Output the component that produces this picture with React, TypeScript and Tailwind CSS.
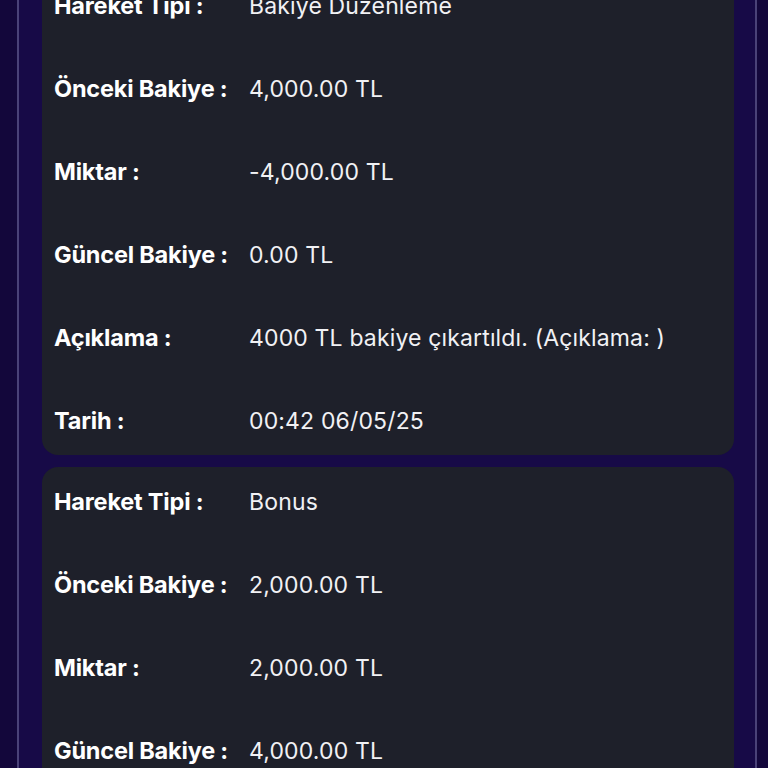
import React from 'react';

type Row = { label: string; value: string };

const transactions: Row[][] = [
  [
    { label: 'Hareket Tipi :', value: 'Bakiye Düzenleme' },
    { label: 'Önceki Bakiye :', value: '4,000.00 TL' },
    { label: 'Miktar :', value: '-4,000.00 TL' },
    { label: 'Güncel Bakiye :', value: '0.00 TL' },
    { label: 'Açıklama :', value: '4000 TL bakiye çıkartıldı. (Açıklama: )' },
    { label: 'Tarih :', value: '00:42 06/05/25' },
  ],
  [
    { label: 'Hareket Tipi :', value: 'Bonus' },
    { label: 'Önceki Bakiye :', value: '2,000.00 TL' },
    { label: 'Miktar :', value: '2,000.00 TL' },
    { label: 'Güncel Bakiye :', value: '4,000.00 TL' },
    { label: 'Açıklama :', value: 'Bonus yüklendi.' },
    { label: 'Tarih :', value: '00:40 06/05/25' },
  ],
];

function TransactionCard({ rows }: { rows: Row[] }) {
  return (
    <div className="rounded-2xl bg-[#1e202a] pl-3 pr-4 pt-5 pb-[19px]">
      <div className="grid grid-cols-[195px_1fr] gap-y-[53px]">
        {rows.map((row) => (
          <React.Fragment key={row.label}>
            <div className="text-[23.5px] leading-[30px] font-bold tracking-[-0.2px] text-white">
              {row.label}
            </div>
            <div className="text-[23px] leading-[30px] tracking-[0.15px] text-[#f1f1f4]">{row.value}</div>
          </React.Fragment>
        ))}
      </div>
    </div>
  );
}

export default function App() {
  return (
    <div
      className="h-[768px] overflow-hidden bg-[#13073b]"
      style={{ fontFamily: 'Inter, "Noto Sans", sans-serif' }}
    >
      <div className="ml-[17px] mr-[11px] -mt-[29px] border-x-2 border-[#4a4278] bg-[#170a47] pl-[23px] pr-[21px] pb-10">
        <div className="flex flex-col gap-3">
          {transactions.map((rows, i) => (
            <TransactionCard key={i} rows={rows} />
          ))}
        </div>
      </div>
    </div>
  );
}
